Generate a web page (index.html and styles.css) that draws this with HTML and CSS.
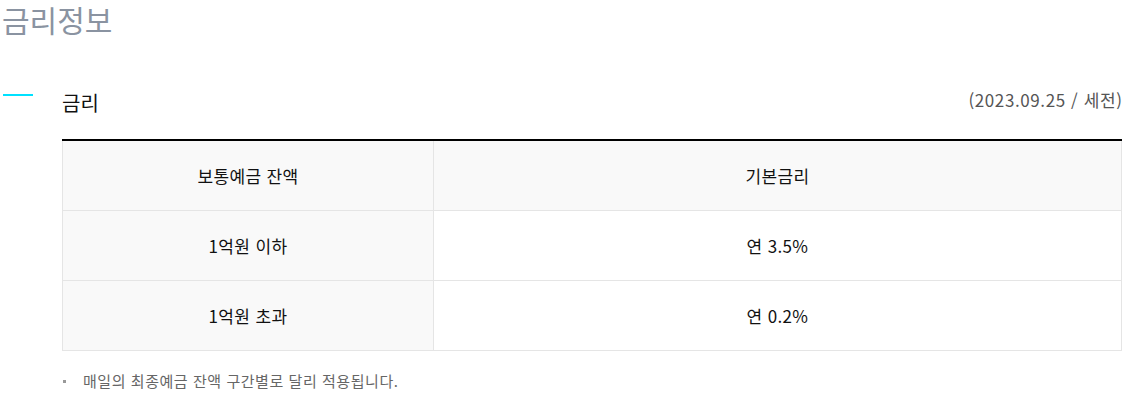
FILE: index.html
```html
<!DOCTYPE html>
<html lang="ko">
<head>
<meta charset="utf-8">
<link rel="stylesheet" href="styles.css">
</head>
<body>
<div class="page">
  <h1 class="page-title">금리정보</h1>
  <section class="rate-section">
    <div class="section-mark"><span class="mark-line"></span></div>
    <div class="section-body">
      <div class="section-head">
        <h2 class="section-title">금리</h2>
        <span class="section-date">(2023.09.25 / 세전)</span>
      </div>
      <table class="rate-table">
        <thead>
          <tr>
            <th class="col-label">보통예금 잔액</th>
            <th>기본금리</th>
          </tr>
        </thead>
        <tbody>
          <tr>
            <th class="col-label">1억원 이하</th>
            <td>연 3.5%</td>
          </tr>
          <tr>
            <th class="col-label">1억원 초과</th>
            <td>연 0.2%</td>
          </tr>
        </tbody>
      </table>
      <ul class="notes">
        <li>매일의 최종예금 잔액 구간별로 달리 적용됩니다.</li>
      </ul>
    </div>
  </section>
</div>
</body>
</html>
```

FILE: styles.css
```css
* { box-sizing: border-box; }
html, body { margin: 0; padding: 0; background: #fff; }
body {
  font-family: "Noto Sans CJK KR", "Noto Sans", sans-serif;
  color: #111;
}
.page {
  width: 1133px;
  padding-right: 11px;
}
.page-title {
  margin: 0;
  padding-left: 2px;
  font-size: 30px;
  font-weight: 400;
  line-height: 38px;
  color: #8a93a1;
}
.rate-section {
  display: flex;
  margin-top: 50px;
}
.section-mark {
  width: 62px;
  flex: none;
  padding-left: 3px;
  padding-top: 6px;
}
.mark-line {
  display: block;
  width: 30px;
  height: 2px;
  background: #00e1ff;
}
.section-body {
  flex: 1;
  min-width: 0;
}
.section-head {
  display: flex;
  justify-content: space-between;
  align-items: flex-start;
  height: 51px;
}
.section-title {
  margin: 0;
  margin-top: 1px;
  font-size: 20px;
  font-weight: 400;
  line-height: 28px;
  color: #111;
}
.section-date {
  font-size: 17px;
  letter-spacing: 0.6px;
  margin-right: -0.6px;
  line-height: 24px;
  color: #555;
}
.rate-table {
  width: 100%;
  border-collapse: collapse;
  border-top: 2px solid #000;
  table-layout: fixed;
}
.rate-table th,
.rate-table td {
  height: 70px;
  padding: 0;
  border: 1px solid #e5e5e5;
  text-align: center;
  vertical-align: middle;
  font-size: 17px;
  letter-spacing: 0.35px;
  font-weight: 400;
  color: #111;
}
.rate-table thead th { background: #f9f9f9; border-top: none; }
.rate-table .col-label {
  width: 371px;
  background: #f9f9f9;
}
.notes {
  list-style: none;
  margin: 0;
  padding: 20px 0 0 0;
}
.notes li {
  position: relative;
  padding-left: 21px;
  font-size: 15px;
  letter-spacing: 0.55px;
  line-height: 20px;
  color: #666;
}
.notes li::before {
  content: "";
  position: absolute;
  left: 1px;
  top: 9px;
  width: 3px;
  height: 3px;
  background: #999;
}
```
